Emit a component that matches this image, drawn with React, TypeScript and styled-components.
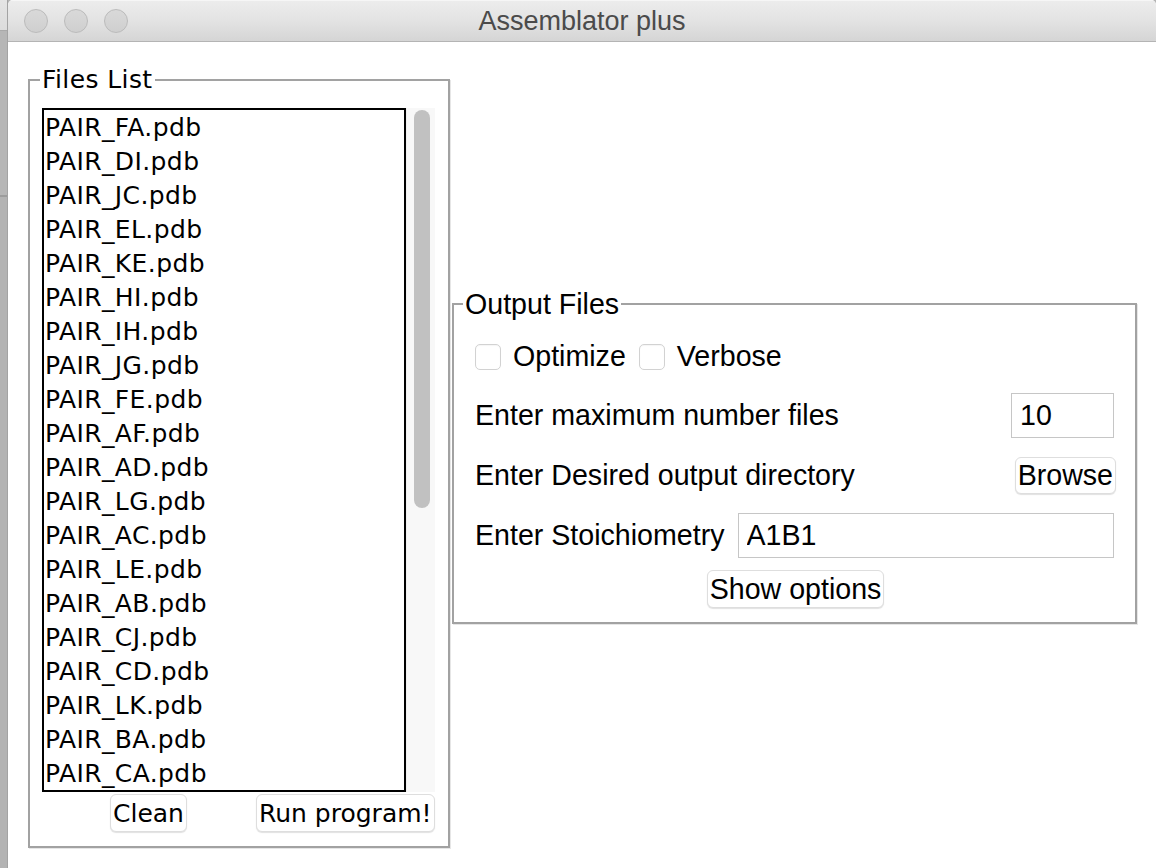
import React from "react";
import styled, { createGlobalStyle } from "styled-components";

const GlobalStyle = createGlobalStyle`
  html, body {
    margin: 0;
    padding: 0;
    background: #b5b5b5;
  }
  * { box-sizing: border-box; }
`;

const Desktop = styled.div`
  display: flex;
  width: 1156px;
  height: 868px;
  overflow: hidden;
`;

const BackStrip = styled.div`
  width: 8px;
  flex: none;
  background: linear-gradient(
    to bottom,
    #e4e4e4 0px,
    #dcdcdc 30px,
    #a9a9a9 30px,
    #a9a9a9 31px,
    #b6b6b6 31px,
    #b6b6b6 195px,
    #9c9c9c 195px,
    #9c9c9c 197px,
    #b3b3b3 197px
  );
  border-right: 1px solid #a3a3a3;
`;

const Window = styled.div`
  flex: 1;
  display: flex;
  flex-direction: column;
  background: #ffffff;
  border-top-left-radius: 5px;
  border-top-right-radius: 5px;
  overflow: hidden;
`;

const TitleBar = styled.div`
  height: 42px;
  flex: none;
  display: grid;
  grid-template-columns: 1fr auto 1fr;
  align-items: center;
  background: linear-gradient(to bottom, #ededed 0%, #e3e3e3 50%, #d5d5d5 100%);
  border-bottom: 1px solid #b4b4b4;
  box-shadow: inset 0 1px 0 #f6f6f6;
`;

const Lights = styled.div`
  display: flex;
  gap: 16px;
  padding-left: 16px;
`;

const Light = styled.span`
  width: 24px;
  height: 24px;
  border-radius: 50%;
  background: linear-gradient(to bottom, #d9d9d9, #cfcfcf);
  border: 1px solid #bbbbbb;
`;

const Title = styled.div`
  font-family: "Liberation Sans", Arial, sans-serif;
  font-size: 27px;
  color: #4b4b4b;
  line-height: 1;
  padding-top: 1px;
`;

const Content = styled.div`
  flex: 1;
  display: flex;
  align-items: center;
  gap: 2px;
  padding: 24px 19px 20px 20px;
`;

const Group = styled.fieldset<{ $sans?: boolean }>`
  margin: 0;
  min-width: 0;
  border: 2px solid #a2a2a2;
  box-shadow: 1px 1px 0 #e6e6e6;
  font-family: ${(p) =>
    p.$sans
      ? `"Liberation Sans", Arial, sans-serif`
      : `"DejaVu Sans", Verdana, sans-serif`};
  font-size: ${(p) => (p.$sans ? "28.6px" : "25px")};
  letter-spacing: ${(p) => (p.$sans ? "0" : "0.4px")};
  color: #000;
`;

const FilesGroup = styled(Group)`
  width: 422px;
  flex: none;
  padding: 14px 13px 14px 12px;
`;

const OutputGroup = styled(Group)`
  flex: 1;
  padding: 10px 19px 14px 21px;
  display: flex;
  flex-direction: column;
`;

const Legend = styled.legend<{ $shift?: number }>`
  padding: 0 2px;
  margin-left: ${(p) => p.$shift ?? -2}px;
  line-height: 28px;
  height: 28px;
`;

const ListArea = styled.div`
  display: flex;
  height: 684px;
`;

const ListBox = styled.div`
  width: 364px;
  border: 2px solid #000;
  padding-left: 1px;
  padding-top: 1px;
  overflow: hidden;
`;

const ListItem = styled.div`
  height: 34px;
  line-height: 34px;
  white-space: nowrap;
`;

const ScrollTrack = styled.div`
  width: 29px;
  background: #f8f8f8;
  border-left: 1px solid #efefef;
  padding: 2px 5px 0 7px;
`;

const ScrollThumb = styled.div`
  height: 398px;
  border-radius: 9px;
  background: #c1c1c1;
`;

const ButtonRow = styled.div`
  display: flex;
  margin-top: 2px;
  padding-left: 68px;
  gap: 69px;
`;

const PushButton = styled.button<{ $h?: number }>`
  height: ${(p) => p.$h ?? 38}px;
  padding: 0 2px;
  white-space: nowrap;
  flex: none;
  background: #ffffff;
  border: 1px solid #dedede;
  border-radius: 6px;
  box-shadow: 0 1px 1px rgba(0, 0, 0, 0.12);
  font: inherit;
  letter-spacing: 0;
  color: #000;
  line-height: 1;
`;

const CheckRow = styled.div`
  height: 57px;
  display: flex;
  align-items: center;
`;

const CheckBox = styled.span`
  width: 26px;
  height: 26px;
  flex: none;
  border: 1px solid #d2d2d2;
  border-radius: 5px;
  background: #ffffff;
  box-shadow: inset 0 1px 1px rgba(0, 0, 0, 0.04);
  margin-right: 12px;
`;

const CheckLabel = styled.span`
  margin-right: 13px;
  line-height: 1;
`;

const FormRow = styled.div`
  height: 60px;
  display: flex;
  align-items: center;
`;

const RowLabel = styled.span`
  flex: 1;
  white-space: nowrap;
  line-height: 1;
`;

const FixedLabel = styled.span`
  white-space: nowrap;
  line-height: 1;
  margin-right: 13px;
`;

const TextField = styled.input<{ $w?: number }>`
  height: 45px;
  width: ${(p) => (p.$w ? `${p.$w}px` : "auto")};
  flex: ${(p) => (p.$w ? "none" : "1")};
  min-width: 0;
  margin-right: 2px;
  border: 1px solid #c6c6c6;
  background: #ffffff;
  padding: 0 8px;
  font: inherit;
  color: #000;
  outline: none;
`;

const CenterRow = styled.div`
  display: flex;
  justify-content: center;
  margin-top: 5px;
`;

const files = [
  "PAIR_FA.pdb",
  "PAIR_DI.pdb",
  "PAIR_JC.pdb",
  "PAIR_EL.pdb",
  "PAIR_KE.pdb",
  "PAIR_HI.pdb",
  "PAIR_IH.pdb",
  "PAIR_JG.pdb",
  "PAIR_FE.pdb",
  "PAIR_AF.pdb",
  "PAIR_AD.pdb",
  "PAIR_LG.pdb",
  "PAIR_AC.pdb",
  "PAIR_LE.pdb",
  "PAIR_AB.pdb",
  "PAIR_CJ.pdb",
  "PAIR_CD.pdb",
  "PAIR_LK.pdb",
  "PAIR_BA.pdb",
  "PAIR_CA.pdb",
];

export default function App() {
  return (
    <>
      <GlobalStyle />
      <Desktop>
        <BackStrip />
        <Window>
          <TitleBar>
            <Lights>
              <Light />
              <Light />
              <Light />
            </Lights>
            <Title>Assemblator plus</Title>
            <div />
          </TitleBar>
          <Content>
            <FilesGroup>
              <Legend>Files List</Legend>
              <ListArea>
                <ListBox>
                  {files.map((f) => (
                    <ListItem key={f}>{f}</ListItem>
                  ))}
                </ListBox>
                <ScrollTrack>
                  <ScrollThumb />
                </ScrollTrack>
              </ListArea>
              <ButtonRow>
                <PushButton>Clean</PushButton>
                <PushButton>Run program!</PushButton>
              </ButtonRow>
            </FilesGroup>
            <OutputGroup $sans>
              <Legend $shift={-12}>Output Files</Legend>
              <CheckRow>
                <CheckBox />
                <CheckLabel>Optimize</CheckLabel>
                <CheckBox />
                <CheckLabel>Verbose</CheckLabel>
              </CheckRow>
              <FormRow>
                <RowLabel>Enter maximum number files</RowLabel>
                <TextField $w={103} defaultValue="10" readOnly />
              </FormRow>
              <FormRow>
                <RowLabel>Enter Desired output directory</RowLabel>
                <PushButton $h={37}>Browse</PushButton>
              </FormRow>
              <FormRow>
                <FixedLabel>Enter Stoichiometry</FixedLabel>
                <TextField defaultValue="A1B1" readOnly />
              </FormRow>
              <CenterRow>
                <PushButton>Show options</PushButton>
              </CenterRow>
            </OutputGroup>
          </Content>
        </Window>
      </Desktop>
    </>
  );
}
